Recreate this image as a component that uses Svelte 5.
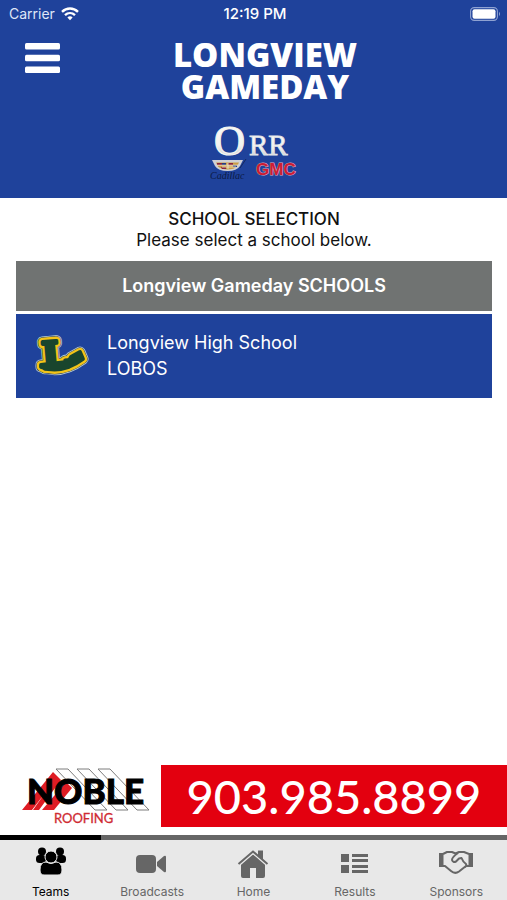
<script lang="ts">
  type School = { name: string; mascot: string };

  const schools: School[] = [{ name: "Longview High School", mascot: "LOBOS" }];
  const tabs = ["Teams", "Broadcasts", "Home", "Results", "Sponsors"];

  let activeTab = $state("Teams");
</script>

<div class="app">
  <header>
    <div class="status">
      <span class="carrier">
        Carrier
        <svg width="18" height="14" viewBox="0 0 18 14" fill="none" stroke="#fff" stroke-width="2.4" aria-hidden="true">
          <path d="M1 4.8C5.6.4 12.4.4 17 4.8" />
          <path d="M4 8.1C6.9 5.4 11.1 5.4 14 8.1" />
          <path d="M6.4 10.4C7.9 9 10.1 9 11.6 10.4L9 13.2Z" fill="#fff" stroke="none" />
        </svg>
      </span>
      <span class="clock">12:19 PM</span>
      <svg class="battery" width="31" height="14" viewBox="0 0 31 14" aria-hidden="true">
        <rect x=".6" y=".6" width="26.8" height="12.8" rx="3.6" fill="none" stroke="#8fa2d2" stroke-width="1.1" />
        <rect x="2.5" y="2.3" width="23" height="9.4" rx="2" fill="#fff" />
        <path d="M29 4.8q2 2.2 0 4.4z" fill="#8fa2d2" />
      </svg>
    </div>

    <div class="top">
      <button class="menu" aria-label="Menu">
        <svg width="35" height="30" viewBox="0 0 35 30" fill="#fff">
          <rect width="35" height="6.6" rx="1.5" />
          <rect y="11.7" width="35" height="6.6" rx="1.5" />
          <rect y="23.4" width="35" height="6.6" rx="1.5" />
        </svg>
      </button>
      <h1>LONGVIEW<br />GAMEDAY</h1>
    </div>

    <svg class="dealer" width="90" height="68" viewBox="0 -8 90 68" role="img" aria-label="Orr Cadillac GMC">
      <defs>
        <linearGradient id="chrome" x1="0" y1="0" x2="0" y2="1">
          <stop offset="0" stop-color="#fff" />
          <stop offset=".6" stop-color="#f3f3ef" />
          <stop offset="1" stop-color="#b3b8bf" />
        </linearGradient>
      </defs>
      <g font-family="'Liberation Serif', serif" fill="url(#chrome)">
        <text x="5" y="33" font-size="43" stroke="#f3f3ef" stroke-width="1.200">O</text>
        <text x="40" y="33" font-size="29" stroke="#e4e6e8" stroke-width=".8">RR</text>
      </g>
      <!-- crest -->
      <path d="M3 38H34L31 44Q28 49 18.500 49Q9 49 6 44Z" fill="#cfd0d5" />
      <path d="M7 40.500H30L28 44.500Q25 47.500 18.500 47.500Q12 47.500 9 44.500Z" fill="#c99b45" />
      <path d="M8 41h5v2H8zM19 41h5v2h-5zM12 45h5v2h-4z" fill="#8d2438" />
      <path d="M13 41h4v2h-4zM24 43h4v2h-4z" fill="#273c80" />
      <path d="M8 43.200H29M19 41V47M13 45H27" stroke="#f1ead5" stroke-width=".8" />
      <path d="M31 46L37 37" stroke="#15275c" stroke-width="1" />
      <text x="1" y="57" font-family="'Liberation Serif', serif" font-style="italic" font-size="10" fill="#0c1a45">Cadillac</text>
      <text x="47" y="53" font-family="'Liberation Sans', sans-serif" font-weight="700" font-size="17" fill="#cd1c33" stroke="#d9a9bb" stroke-width="1" paint-order="stroke">GMC</text>
    </svg>
  </header>

  <main>
    <h2>SCHOOL SELECTION</h2>
    <p class="hint">Please select a school below.</p>

    <h3>Longview Gameday SCHOOLS</h3>
    {#each schools as school}
      <button class="school">
        <svg width="58" height="46" viewBox="0 0 58 46" aria-hidden="true">
          <defs>
            <g id="lobo" stroke-linejoin="round">
              <path d="M8 34Q28 42 50 26L47 19L38 24L35 29Q25 30 8 32Z" />
              <text x="9" y="35" font-family="'DejaVu Serif', serif" font-weight="700" font-size="37" transform="rotate(-5 20 24)">L</text>
            </g>
          </defs>
          <use href="#lobo" fill="#b9c9c9" stroke="#b9c9c9" stroke-width="11" />
          <use href="#lobo" fill="#27406a" stroke="#27406a" stroke-width="9.400" />
          <use href="#lobo" fill="#f2c318" stroke="#f2c318" stroke-width="8.400" />
          <use href="#lobo" fill="#19452d" stroke="#19452d" stroke-width="3.800" />
        </svg>
        <span class="label">{school.name}<br />{school.mascot}</span>
      </button>
    {/each}
  </main>

  <a class="ad" href="tel:9039858899">
    <span class="noble">
      <svg width="136" height="62" viewBox="0 0 136 62" role="img" aria-label="Noble Roofing">
        <path d="M2 45L33 7L41 15L19 45H13L25 28L12 45Z" fill="#df1c24" />
        <path d="M22 45L46 17L52 23L34 45Z" fill="#df1c24" />
        <g fill="none" stroke="#7d7d7d" stroke-width="1">
          <path d="M36 4H48L87 45H75Z" />
          <path d="M57 4H69L108 45H96Z" />
          <path d="M78 4H90L129 45H117Z" />
        </g>
        <text x="7" y="39" font-family="Lato, sans-serif" font-weight="900" font-size="35" fill="#000" stroke="#000" stroke-width="1">NOBLE</text>
        <text x="34" y="58" font-family="Lato, sans-serif" font-size="13" fill="#cf2b33" stroke="#cf2b33" stroke-width=".3">ROOFING</text>
      </svg>
    </span>
    <span class="phone">903.985.8899</span>
  </a>

  <nav>
    {#each tabs as tab}
      <button class="tab" class:active={tab === activeTab} onclick={() => (activeTab = tab)}>
        <svg width="36" height="32" viewBox="0 0 36 32" fill="currentColor" aria-hidden="true">
          {#if tab === "Teams"}
            <circle cx="9" cy="6.500" r="4" />
            <circle cx="27" cy="6.500" r="4" />
            <rect x="3" y="10" width="10" height="8" rx="3.500" />
            <rect x="23" y="10" width="10" height="8" rx="3.500" />
            <g stroke="#e8e8e8" stroke-width="1">
              <path d="M13 17Q18 20 23 17Q29 17 29 25Q29 30 25 30H11Q7 30 7 25Q7 17 13 17Z" />
              <circle cx="18" cy="12" r="6" />
            </g>
          {:else if tab === "Broadcasts"}
            <rect x="2" y="10" width="20" height="18" rx="4" />
            <path d="M23 17L30 11Q32 10 32 12V26Q32 28 30 27L23 21Z" />
          {:else if tab === "Home"}
            <path d="M18 9L30 19V31Q30 33 28 33H21V23H15V33H8Q6 33 6 31V19Z" />
            <path d="M3.500 19L18 6.500L32.500 19" fill="none" stroke="#e8e8e8" stroke-width="4.500" />
            <path d="M23 5.500H28V15L23 11Z" />
            <path d="M3.500 19L18 6.500L32.500 19" fill="none" stroke="currentColor" stroke-width="2" />
          {:else if tab === "Results"}
            <path d="M4 9h8v8H4zM4 20h8v8H4zM15 9h16v3H15zM15 14h16v3H15zM15 20h16v3H15zM15 25h16v3H15z" />
          {:else}
            <path d="M1 8h4.500v14H1zM30.500 8H35v14h-4.500z" />
            <path d="M5 9L9 7H14L17.500 8.500L21 7H26L31 9M5 21H7L13 26Q17 29.500 21 26.500L28 21H31M20 8Q14 12 14 15Q15 18 18 16.500L21 13.500L23.500 13Q25 17 28 19Q29 21 27 22" fill="none" stroke="currentColor" stroke-width="2" stroke-linejoin="round" />
          {/if}
        </svg>
        {tab}
      </button>
    {/each}
  </nav>
</div>

<style>
  :global(body) {
    margin: 0;
    background: #fff;
  }
  .app {
    display: flex;
    flex-direction: column;
    min-height: 100vh;
    font-family: Inter, "Liberation Sans", sans-serif;
    color: #111;
  }
  button {
    border: 0;
    padding: 0;
    background: none;
    font: inherit;
    color: inherit;
    cursor: pointer;
  }
  svg {
    display: block;
  }
  header {
    background: #1f429b;
    color: #fff;
    padding-bottom: 16px;
  }
  .status {
    display: grid;
    grid-template-columns: 1fr auto 1fr;
    align-items: center;
    height: 27px;
    padding: 0 6px 0 9px;
    font-size: 14px;
  }
  .carrier {
    display: flex;
    align-items: center;
    gap: 6px;
    color: #dfe6f7;
  }
  .clock {
    font-size: 15px;
    font-weight: 500;
  }
  .battery {
    justify-self: end;
  }
  .top {
    display: flex;
    align-items: flex-start;
    padding: 12px 37px 0 25px;
  }
  .menu {
    margin-top: 4px;
  }
  h1 {
    flex: 1;
    margin: 0;
    font-family: "Open Sans", sans-serif;
    font-size: 33px;
    font-weight: 800;
    line-height: 32px;
    text-align: center;
  }
  .dealer {
    margin: 11px auto 0;
  }
  main {
    flex: 1;
    padding: 11px 15px 0 16px;
  }
  h2,
  .hint {
    margin: 0;
    font-size: 17px;
    font-weight: 400;
    line-height: 21px;
    text-align: center;
  }
  h2 {
    font-weight: 500;
  }
  h3 {
    margin: 10px 0 3px;
    background: #707372;
    color: #fff;
    font-size: 18px;
    font-weight: 600;
    line-height: 50px;
    text-align: center;
  }
  .school {
    display: flex;
    align-items: center;
    gap: 16px;
    width: 100%;
    padding: 16px 17px;
    background: #1f429b;
    color: #fff;
    font-size: 18px;
    line-height: 26px;
    text-align: left;
  }
  .ad {
    display: flex;
    height: 62px;
    margin-bottom: 8px;
    text-decoration: none;
  }
  .noble {
    flex: none;
    width: 141px;
    padding-left: 20px;
  }
  .phone {
    flex: 1;
    background: #e3000f;
    color: #fff;
    font-family: Lato, sans-serif;
    font-size: 47px;
    font-weight: 500;
    line-height: 62px;
    text-align: center;
  }
  nav {
    display: grid;
    grid-template-columns: repeat(5, 1fr);
    background: #e8e8e8;
  }
  .tab {
    display: flex;
    flex-direction: column;
    align-items: center;
    gap: 7px;
    padding: 5px 0 0;
    border-top: 5px solid #666;
    color: #666;
    font-size: 12px;
    line-height: 16px;
  }
  .tab svg {
    overflow: visible;
  }
  .tab.active {
    border-color: #000;
    color: #000;
  }
</style>
